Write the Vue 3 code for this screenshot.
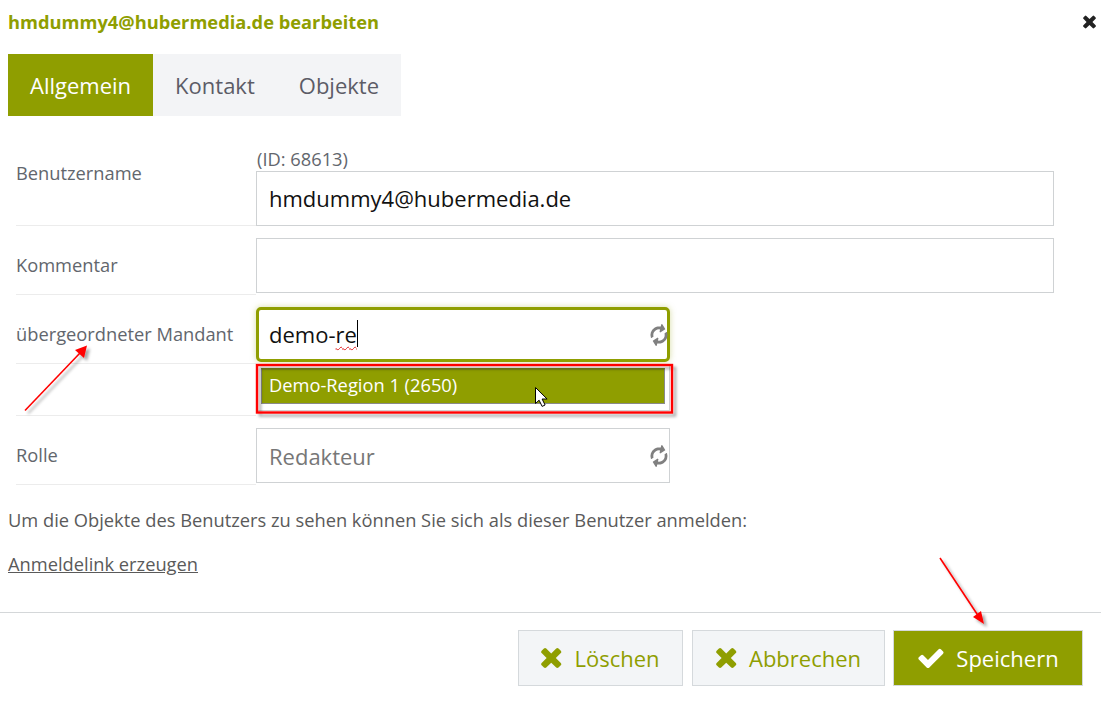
<script setup>
const timesPath = 'M1298 1214q0 40-28 68l-136 136q-28 28-68 28t-68-28l-294-294-294 294q-28 28-68 28t-68-28l-136-136q-28-28-28-68t28-68l294-294-294-294q-28-28-28-68t28-68l136-136q28-28 68-28t68 28l294 294 294-294q28-28 68-28t68 28l136 136q28 28 28 68t-28 68l-294 294 294 294q28 28 28 68z'
const checkPath = 'M1671 566q0 40-28 68l-724 724-136 136q-28 28-68 28t-68-28l-136-136-362-362q-28-28-28-68t28-68l136-136q28-28 68-28t68 28l294 295 656-657q28-28 68-28t68 28l136 136q28 28 28 68z'
const refreshPath = 'M1639 1056q0 5-1 7-64 268-268 434.5t-478 166.5q-146 0-282.5-55t-243.5-157l-129 129q-19 19-45 19t-45-19-19-45v-448q0-26 19-45t45-19h448q26 0 45 19t19 45-19 45l-137 137q71 66 161 102t187 36q134 0 250-65t186-179q11-17 53-117 8-23 30-23h192q13 0 22.5 9.5t9.5 22.5zm25-800v448q0 26-19 45t-45 19h-448q-26 0-45-19t-19-45 19-45l138-138q-148-137-349-137-134 0-250 65t-186 179q-11 17-53 117-8 23-30 23h-199q-13 0-22.5-9.5t-9.5-22.5v-7q65-268 270-434.5t480-166.5q146 0 284 55.5t245 156.5l130-129q19-19 45-19t45 19 19 45z'
</script>

<template>
  <div class="modal">
    <header class="head">
      <h1 class="title">hmdummy4@hubermedia.de bearbeiten</h1>
      <svg class="close" viewBox="100 200 1300 1300"><path :d="timesPath" /></svg>
    </header>

    <nav class="tabs">
      <span class="tab active">Allgemein</span>
      <span class="tab">Kontakt</span>
      <span class="tab">Objekte</span>
    </nav>

    <form class="form" @submit.prevent>
      <div class="row first">
        <label class="label">Benutzername</label>
        <div class="field">
          <div class="hint">(ID: 68613)</div>
          <div class="input">hmdummy4@hubermedia.de</div>
        </div>
      </div>

      <div class="row">
        <label class="label">Kommentar</label>
        <div class="field"><div class="input"></div></div>
      </div>

      <div class="row">
        <label class="label">übergeordneter Mandant</label>
        <div class="field narrow">
          <div class="input focused">
            <span>demo-<span class="spell">re</span></span><span class="caret"></span>
            <svg class="spin" viewBox="0 0 1792 1792"><path :d="refreshPath" /></svg>
          </div>
        </div>
      </div>

      <div class="row short">
        <label class="label"></label>
        <div class="field"></div>
      </div>

      <div class="row">
        <label class="label">Rolle</label>
        <div class="field narrow">
          <div class="input placeholder">
            Redakteur
            <svg class="spin" viewBox="0 0 1792 1792"><path :d="refreshPath" /></svg>
          </div>
        </div>
      </div>
    </form>

    <p class="note">Um die Objekte des Benutzers zu sehen können Sie sich als dieser Benutzer anmelden:</p>
    <a class="link">Anmeldelink erzeugen</a>

    <footer class="foot">
      <button class="btn" type="button">
        <svg class="btn-icon" viewBox="100 200 1300 1300"><path :d="timesPath" /></svg>Löschen
      </button>
      <button class="btn" type="button">
        <svg class="btn-icon" viewBox="100 200 1300 1300"><path :d="timesPath" /></svg>Abbrechen
      </button>
      <button class="btn primary" type="button">
        <svg class="btn-icon check" viewBox="100 250 1600 1300"><path :d="checkPath" /></svg>Speichern
      </button>
    </footer>

    <!-- dropdown over the form -->
    <div class="menu">
      <div class="option">Demo-Region 1 (2650)</div>
    </div>

    <!-- annotations drawn on top of the screenshot -->
    <svg class="annot" viewBox="0 0 1101 703">
      <defs>
        <filter id="sh" x="-30%" y="-30%" width="170%" height="170%">
          <feDropShadow dx="3" dy="3" stdDeviation="1.6" flood-color="#000" flood-opacity="0.35" />
        </filter>
      </defs>
      <g filter="url(#sh)">
        <rect x="257" y="365" width="415" height="47.5" fill="none" stroke="#f00" stroke-width="2.4" />
      </g>
      <g filter="url(#sh)">
        <line x1="25" y1="410.5" x2="80" y2="353" stroke="#f00" stroke-width="1.6" />
        <polygon points="87,345.5 84,358 75,350" fill="#f00" />
      </g>
      <g filter="url(#sh)">
        <line x1="940" y1="558" x2="979" y2="617" stroke="#f00" stroke-width="1.6" />
        <polygon points="984,624 973,617 981,611" fill="#f00" />
      </g>
      <path d="M535.5 387.5v16l3.6-3.3 3 6.2 3-1.4-3-6h5z" fill="#fff" stroke="#000" stroke-width="1" />
    </svg>
  </div>
</template>

<style>
html, body { background: #fff; }
</style>

<style scoped>
.modal {
  position: relative;
  width: 1101px;
  height: 703px;
  overflow: hidden;
  background: #fff;
  font-family: "Open Sans", "Noto Sans", sans-serif;
  color: #5a5a5a;
}
.head {
  display: flex;
  justify-content: space-between;
  align-items: center;
  height: 44px;
  padding: 0 4px 1px 8px;
  box-sizing: border-box;
}
.title {
  margin: 0;
  font-size: 18.3px;
  font-weight: 700;
  color: #8f9e00;
}
.close { width: 14px; height: 14px; fill: #222; }
.tabs {
  display: flex;
  width: 393px;
  height: 62px;
  margin: 10px 0 0 8px;
  background: #f3f4f6;
  font-size: 22px;
}
.tab {
  display: flex;
  align-items: center;
  padding: 0 22px;
  color: #5c5c66;
}
.tab.active {
  background: #8f9e00;
  color: #fff;
}
.form {
  width: 1038px;
  margin: 34px 0 0 16px;
}
.row {
  display: grid;
  grid-template-columns: 240px 1fr;
  height: 69px;
}
.row.first { height: 76px; }
.row.short { height: 52px; }
.label {
  display: block;
  box-sizing: border-box;
  padding-top: 27px;
  border-bottom: 1px solid #ececec;
  font-size: 18.3px;
  line-height: 24px;
  color: #62666d;
}
.row.first .label { padding-top: 11px; }
.row.short .label { padding-top: 0; }
.field { padding-top: 12px; }
.row.first .field { padding-top: 0; }
.field.narrow { width: 414px; }
.hint {
  height: 21px;
  padding-left: 1px;
  font-size: 18.3px;
  line-height: 18px;
  color: #62666d;
}
.input {
  position: relative;
  display: flex;
  align-items: center;
  box-sizing: border-box;
  height: 55px;
  padding: 0 12px 2px;
  border: 1px solid #cfd2d4;
  font-size: 22px;
  color: #111;
  background: #fff;
}
.input.placeholder { color: #777; padding-bottom: 0; }
.input.focused {
  border: 3px solid #8f9e00;
  border-radius: 5px;
  padding: 0 10px 2px;
  box-shadow: 0 0 6px rgba(143, 158, 0, 0.35);
}
.spell {
  text-decoration: underline wavy #e02020 1px;
  text-underline-offset: 3px;
}
.caret {
  display: inline-block;
  width: 1px;
  height: 27px;
  background: #000;
}
.spin {
  position: absolute;
  right: 0;
  top: 50%;
  width: 20px;
  height: 20px;
  transform: translateY(-50%) rotate(-32deg);
  fill: #808080;
}
.input.focused .spin { right: -2px; }
.note {
  margin: 23px 0 0 8px;
  font-size: 18.3px;
  line-height: 24px;
  color: #5a5a5a;
}
.link {
  display: inline-block;
  margin: 20px 0 0 8px;
  font-size: 18.3px;
  line-height: 24px;
  color: #5a5a5a;
  text-decoration: underline;
}
.foot {
  position: absolute;
  left: 0;
  right: 0;
  top: 612px;
  display: flex;
  justify-content: flex-end;
  gap: 9px;
  box-sizing: border-box;
  padding: 17px 18px 0 0;
  border-top: 1px solid #d4d7d9;
}
.btn {
  display: flex;
  align-items: center;
  justify-content: center;
  gap: 11px;
  box-sizing: border-box;
  height: 56px;
  border: 1px solid #d5d9dc;
  background: #f3f5f7;
  color: #8f9e00;
  font-family: inherit;
  font-size: 22px;
  width: 165px;
  padding: 0;
}
.btn:nth-child(2) { width: 193px; }
.btn.primary {
  width: 190px;
  gap: 12px;
  padding-left: 1px;
  background: #8f9e00;
  color: #fff;
  margin-left: -1px;
}
.btn-icon { width: 22px; height: 22px; fill: #8f9e00; }
.btn-icon.check { width: 26px; fill: #fff; }
.menu {
  position: absolute;
  left: 257px;
  top: 364px;
  box-sizing: border-box;
  width: 413px;
  height: 47px;
  padding: 4px 4px 7px;
  background: #fff;
  border-bottom: 1px solid #d0d0d0;
  border-right: 1px solid #d0d0d0;
}
.option {
  display: flex;
  align-items: center;
  box-sizing: border-box;
  height: 36px;
  padding: 0 0 4px 7px;
  background: #8f9e00;
  border-top: 2px solid #7f8a1a;
  border-right: 1px solid #8a8a8a;
  border-bottom: 1px solid #8a8a8a;
  border-left: 1px solid #8a8a8a;
  color: #fff;
  font-size: 18.3px;
}
.annot {
  position: absolute;
  left: 0;
  top: 0;
  width: 1101px;
  height: 703px;
  pointer-events: none;
}
</style>
